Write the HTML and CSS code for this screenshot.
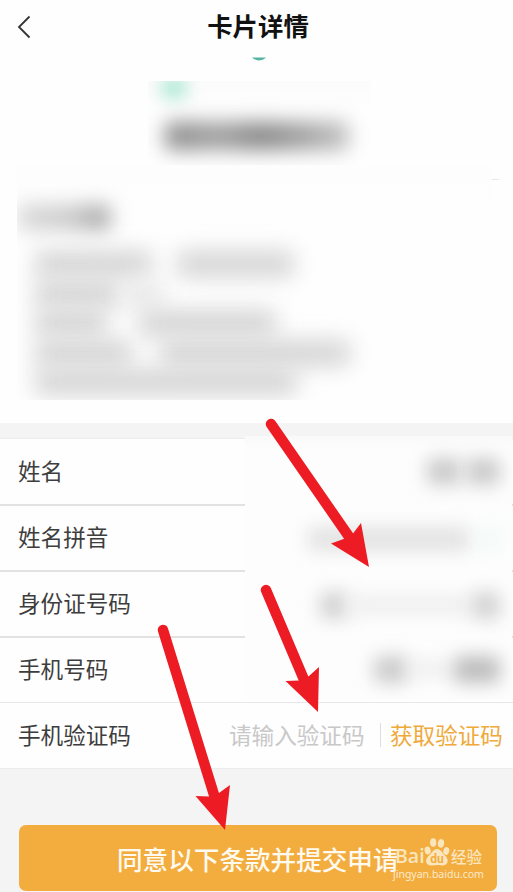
FILE: index.html
```html
<!DOCTYPE html>
<html lang="zh-CN">
<head>
<meta charset="utf-8">
<title>卡片详情</title>
<link rel="stylesheet" href="styles.css">
</head>
<body>
<main class="screen">
  <header class="header">
    <svg class="back" viewBox="0 0 16 24"><path d="M13.500 1.500 L3 12 L13.500 22.500"/></svg>
    <h1>卡片详情</h1>
    <span class="header-end"></span>
  </header>

  <section class="intro">
    <svg class="arc" viewBox="0 0 14 4"><path d="M0 .5 H14 C10 4.500 4 4.500 0 .5Z"/></svg>
    <div class="card-name">
      <i class="smudge mint"></i>
      <i class="smudge name"></i>
    </div>
    <div class="details-wrap">
      <div class="details">
        <i class="smudge heading"></i>
        <div class="line l1"><i class="smudge"></i><i class="smudge"></i></div>
        <div class="line l2"><i class="smudge"></i><i class="smudge faint"></i></div>
        <div class="line l3"><i class="smudge"></i><i class="smudge"></i></div>
        <div class="line l4"><i class="smudge"></i><i class="smudge"></i></div>
        <div class="line l5"><i class="smudge"></i></div>
      </div>
      <i class="dash"></i>
    </div>
  </section>

  <section class="form">
    <div class="row first"><span>姓名</span><div class="mask v1"><i class="smudge"></i><i class="smudge"></i></div></div>
    <div class="row"><span>姓名拼音</span><div class="mask v2"><i class="smudge"></i><i class="smudge mint-dot"></i></div></div>
    <div class="row"><span>身份证号码</span><div class="mask v3"><i class="smudge"></i><i class="smudge mid"></i><i class="smudge"></i></div></div>
    <div class="row phone"><span>手机号码</span><div class="mask v4"><i class="smudge"></i><i class="smudge mid"></i><i class="smudge"></i></div></div>
    <div class="row code"><span>手机验证码</span><span class="placeholder">请输入验证码</span><span class="get-code">获取验证码</span></div>
  </section>

  <footer class="footer">
    <div class="submit">同意以下条款并提交申请</div>
    <div class="watermark">
      <div class="brand">
        <span class="bai">Bai</span>
        <svg class="paw" viewBox="0 0 26 30">
          <ellipse cx="3.600" cy="13.500" rx="3" ry="4" transform="rotate(-15 3.600 13.500)"/>
          <ellipse cx="9.200" cy="5.600" rx="3.100" ry="4.300"/>
          <ellipse cx="17" cy="6.400" rx="3.100" ry="4.300" transform="rotate(10 17 6.400)"/>
          <ellipse cx="22.300" cy="14" rx="2.900" ry="3.900" transform="rotate(15 22.300 14)"/>
          <path d="M13 12 C17 12 18 16 21 18.500 C26 23 23.500 29 18 28.500 C14 27.800 11 28.200 8 28.500 C1.500 29 .5 22.500 4.500 19 C8 16 9 12 13 12Z"/>
          <text x="6.200" y="26">du</text>
        </svg>
        <span class="jy">经验</span>
      </div>
      <div class="url">jingyan.baidu.com</div>
    </div>
  </footer>

  <svg class="arrows" viewBox="0 0 513 892">
    <path class="shaft" d="M271 424 L352 541 M266 590 L305 682 M163 630 L215 798"/>
    <path class="head" d="M369 567 L331 543.500 L345 538.500 L353 533.500 L361 523Z M318 712 L285.500 681 L299 680.500 L309 676 L319 667Z M225 830 L195.500 796 L209 796.500 L219 793 L230 785Z"/>
  </svg>
</main>
</body>
</html>
```

FILE: styles.css
```css
* { box-sizing: border-box; }
body { margin: 0; font-family: "Noto Sans CJK SC", sans-serif; }
.screen { position: relative; width: 513px; height: 892px; overflow: hidden; background: #fefefe; }

.header { display: flex; align-items: center; justify-content: space-between; height: 53px; padding: 0 17px 0 16px; }
.back { width: 16px; height: 24px; fill: none; stroke: #333; stroke-width: 1.8; }
.header h1 { margin: 0; padding-bottom: 2px; font-size: 25.4px; line-height: 37px; font-weight: 700; color: #111; }
.header-end { width: 12px; }

.intro { height: 370px; padding-top: 4px; }
.arc { display: block; width: 14px; height: 4px; margin-left: 252px; fill: #55b5a3; }
.smudge { display: block; flex: none; filter: blur(7px); border-radius: 6px; }
.card-name { width: 222px; height: 84px; margin: 20px 0 0 148px; overflow: hidden; background: linear-gradient(#fbfbfb, #fefefe 30px); }
.mint { width: 26px; height: 22px; margin: -4px 0 0 13px; background: #b4ead9; filter: blur(8px); }
.name { width: 184px; height: 28px; margin: 23px 0 0 17px; background: linear-gradient(90deg, #8a8a8a, #a0a0a0 30%, #868686 52%, #a0a0a0 75%, #c2c2c2); filter: blur(10px); }
.details-wrap { display: flex; width: 499px; margin-left: 17px; }
.details { width: 475px; height: 235px; overflow: hidden; background: linear-gradient(#fdfdfd, #fefefe 30%); }
.dash { width: 7px; height: 1px; margin-top: 14px; background: #e8e8e8; }
.heading { width: 92px; height: 25px; margin: 40px 0 21px 1px; background: linear-gradient(90deg, #d8d8d8, #c8c8c8 60%, #9c9c9c); filter: blur(10px); }
.line { display: flex; height: 29.500px; margin-left: 18px; }
.line .smudge { height: 26px; background: #d4d4d4; filter: blur(11px); }
.l1 .smudge { width: 117px; margin-right: 25px; }
.l2 .smudge { width: 84px; margin-right: 4px; }
.l2 .faint { width: 40px; background: #e8e8e8; }
.l3 .smudge { width: 72px; margin-right: 32px; }
.l3 .smudge + .smudge { width: 137px; }
.l4 .smudge { width: 97px; margin-right: 28px; }
.l4 .smudge + .smudge { width: 190px; }
.l5 .smudge { width: 262px; }

.form { height: 346px; padding-top: 15px; background: #f4f4f4; }
.row { display: flex; align-items: center; height: 66px; padding: 0 0 2px 18px; border-bottom: 2px solid #e2e2e2; background: #fefefe; color: #3d3d3d; font-size: 22.6px; line-height: 33px; }
.row > span { margin-bottom: 1px; }
.row.first { height: 68px; border-top: 1px solid #ececec; }
.row.first > span { margin-bottom: 0; }
.row > span:first-child { width: 227px; }
.row.phone { height: 65px; border-bottom: 1px solid #e7e7e7; }
.row.code { height: 66px; border-bottom: 1px solid #ececec; }
.row.code > span { margin-bottom: 0; }
.row.code > span:first-child { width: 211px; }
.placeholder { width: 152px; color: #c8c8c8; border-right: 1px solid #ddd; line-height: 24px; }
.get-code { padding-left: 9px; color: #efaa3b; }
.mask { display: flex; align-items: center; justify-content: flex-end; align-self: flex-start; width: 267px; height: 66px; padding-right: 12px; overflow: hidden; background: #fdfdfd; }
.first .mask { height: 70px; margin-top: -3px; background: linear-gradient(#f9f9f9, #fdfdfd 12px); }
.mask .smudge { height: 27px; background: #cacaca; filter: blur(9px); }
.v1 .smudge { width: 34px; margin-left: 5px; }
.v2 .smudge { width: 162px; height: 24px; background: #e2e2e2; }
.v2 .mint-dot { width: 18px; margin-left: 12px; background: #effaf7; }
.v3 .smudge { width: 28px; background: #d2d2d2; }
.v3 .mid { width: 124px; height: 18px; background: #eee; }
.v4 { height: 62px; }
.v4 .smudge { width: 34px; background: #cbcbcb; }
.v4 .mid { width: 46px; height: 14px; background: #ececec; }
.v4 .mid + .smudge { width: 46px; background: #bdbdbd; }

.footer { position: relative; height: 123px; padding: 56px 16px 0 19px; background: #f4f4f4; }
.submit { height: 66px; padding-left: 98px; border-radius: 7px; background: #f2ad3e; color: #fffaf0; font-size: 25.6px; line-height: 67px; font-weight: 500; white-space: nowrap; }
.watermark { position: absolute; left: 393px; top: 67px; width: 95px; color: #fbe5bd; }
.brand { display: flex; align-items: flex-end; height: 31px; }
.bai { width: 31px; padding-left: 2px; font: 600 19.5px/22px "Open Sans", sans-serif; }
.paw { width: 26px; height: 30px; fill: #fbe5bd; }
.paw text { font: 700 12px Roboto, sans-serif; fill: #f2ad3e; }
.jy { margin-left: 1px; font-size: 15.500px; line-height: 22px; font-weight: 500; white-space: nowrap; }
.url { font: 10.5px/15px "Noto Sans", sans-serif; color: #fceacb; white-space: nowrap; }

.arrows { position: absolute; inset: 0; width: 513px; height: 892px; pointer-events: none; }
.shaft { fill: none; stroke: #ed1c24; stroke-width: 10.500; stroke-linecap: round; }
.head { fill: #ed1c24; }
```
